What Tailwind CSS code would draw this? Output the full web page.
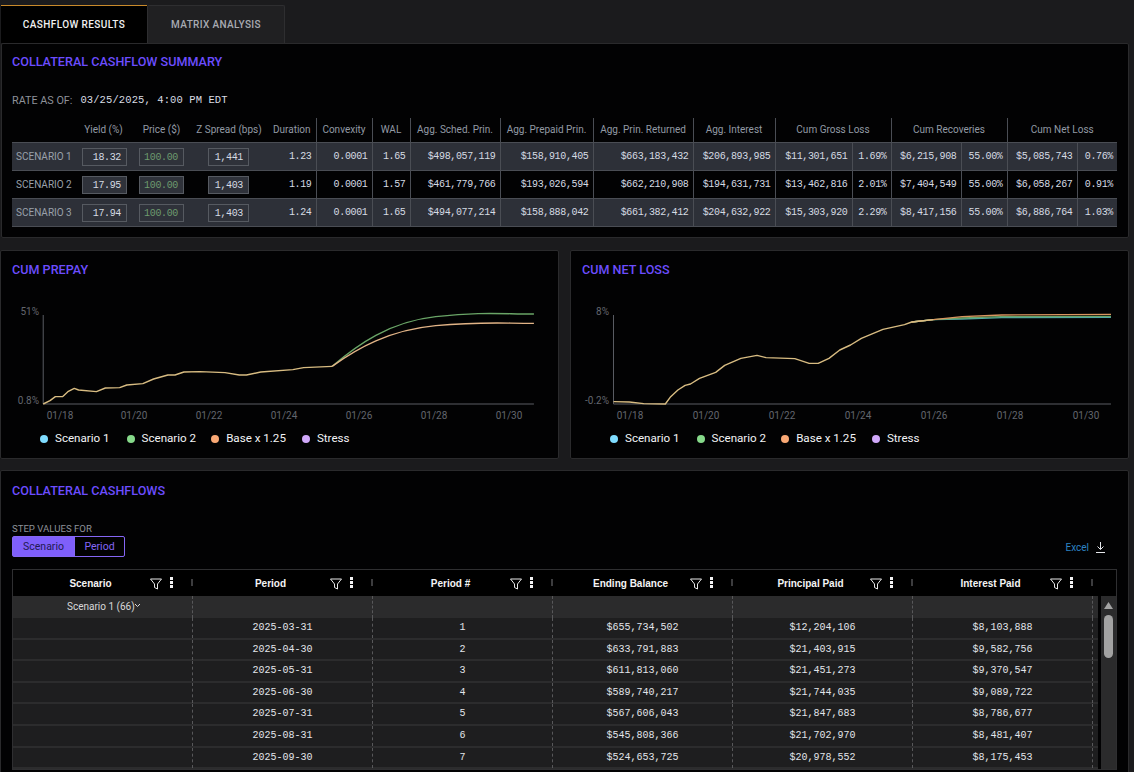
<!DOCTYPE html>
<html><head><meta charset="utf-8"><script src="https://cdn.jsdelivr.net/npm/@tailwindcss/browser@4"></script></head>
<body class="bg-[#1b1b1d] font-['Roboto',sans-serif] overflow-hidden w-[1134px] h-[772px]">
<div class="w-[1129px] h-[772px] overflow-hidden">
  <!-- Tabs -->
  <div class="flex h-[43px] pt-[5px] pl-px">
    <div class="w-[146px] flex items-center justify-center bg-black border-t border-[#c98a2b] text-[10px] font-medium tracking-[0.4px] text-[#f1f1f1]">CASHFLOW RESULTS</div>
    <div class="w-[138px] flex items-center justify-center bg-[#202022] border border-b-0 border-[#2e2e30] rounded-t-[2px] text-[10px] font-medium tracking-[0.35px] text-[#a8abb2]">MATRIX ANALYSIS</div>
  </div>
  <!-- Summary panel -->
  <section class="ml-px h-[195px] bg-[#020203] border border-[#2a2a2c] rounded-[2px] pl-[10px]">
    <h2 class="pt-[11px] h-[35px] text-[12.6px] leading-[14px] font-medium text-[#6c4dff]">COLLATERAL CASHFLOW SUMMARY</h2>
    <div class="flex items-center h-[14px] mt-[15px] gap-[8px]">
      <span class="text-[10.8px] text-[#8d9199]">RATE AS OF:</span>
      <span class="font-['Liberation_Mono',monospace] text-[10.5px] tracking-[0.1px] text-[#d9dde3]">03/25/2025, 4:00 PM EDT</span>
    </div>
    <table class="table-fixed w-[1105px] mt-[10px] font-['Liberation_Mono',monospace] text-[10px] tracking-[-0.35px] text-[#d5dbe3]">
      <colgroup><col class="w-[62px]"><col class="w-[59px]"><col class="w-[57px]"><col class="w-[78px]"><col class="w-[48px]"><col class="w-[56px]"><col class="w-[38px]"><col class="w-[90px]"><col class="w-[93px]"><col class="w-[100px]"><col class="w-[82px]"><col class="w-[77px]"><col class="w-[39px]"><col class="w-[70px]"><col class="w-[46px]"><col class="w-[70px]"><col class="w-[40px]"></colgroup>
      <thead class="font-['Roboto',sans-serif] text-[10px] font-normal tracking-normal text-[#929aa5]">
        <tr class="h-[24px]">
          <th class="font-normal"></th>
          <th class="font-normal">Yield (%)</th>
          <th class="font-normal">Price ($)</th>
          <th class="font-normal">Z Spread (bps)</th>
          <th class="font-normal border-r border-[#4a4d54]">Duration</th>
          <th class="font-normal border-r border-[#4a4d54]">Convexity</th>
          <th class="font-normal border-r border-[#4a4d54]">WAL</th>
          <th class="font-normal border-r border-[#4a4d54]">Agg. Sched. Prin.</th>
          <th class="font-normal border-r border-[#4a4d54]">Agg. Prepaid Prin.</th>
          <th class="font-normal border-r border-[#4a4d54]">Agg. Prin. Returned</th>
          <th class="font-normal border-r border-[#4a4d54]">Agg. Interest</th>
          <th colspan="2" class="font-normal border-r border-[#4a4d54]">Cum Gross Loss</th>
          <th colspan="2" class="font-normal border-r border-[#4a4d54]">Cum Recoveries</th>
          <th colspan="2" class="font-normal">Cum Net Loss</th>
        </tr>
      </thead>
      <tbody class="text-right [&_td]:pt-px">
        <tr class="h-[28px] bg-[#2d3038] border-y border-[#4a4d54]">
          <td class="pl-1 text-left font-['Roboto',sans-serif] text-[10px] tracking-normal text-[#9aa1ab]">SCENARIO 1</td>
          <td><div class="ml-2 w-[45px] h-[18px] leading-[17px] bg-[#2f323a] border border-[#565a61] pr-[5px]">18.32</div></td>
          <td><div class="ml-1.5 w-[45px] h-[18px] leading-[17px] bg-[#2f323a] border border-[#565a61] pr-[5px] text-[#6d9a6e]">100.00</div></td>
          <td><div class="ml-[18px] w-[41px] h-[18px] leading-[17px] bg-[#2f323a] border border-[#565a61] pr-[5px]">1,441</div></td>
          <td class="pr-1 border-r border-[#4a4d54]">1.23</td><td class="pr-1 border-r border-[#4a4d54]">0.0001</td><td class="pr-1 border-r border-[#4a4d54]">1.65</td>
          <td class="pr-1 border-r border-[#4a4d54]">$498,057,119</td><td class="pr-1 border-r border-[#4a4d54]">$158,910,405</td><td class="pr-1 border-r border-[#4a4d54]">$663,183,432</td><td class="pr-1 border-r border-[#4a4d54]">$206,893,985</td>
          <td class="pr-1 border-r border-[#4a4d54]">$11,301,651</td><td class="pr-1 border-r border-[#4a4d54]">1.69%</td><td class="pr-1 border-r border-[#4a4d54]">$6,215,908</td><td class="pr-1 border-r border-[#4a4d54]">55.00%</td><td class="pr-1 border-r border-[#4a4d54]">$5,085,743</td><td class="pr-1">0.76%</td>
        </tr>
        <tr class="h-[28px] bg-[#020203] border-b border-[#4a4d54]">
          <td class="pl-1 text-left font-['Roboto',sans-serif] text-[10px] tracking-normal text-[#9aa1ab]">SCENARIO 2</td>
          <td><div class="ml-2 w-[45px] h-[18px] leading-[17px] bg-[#2f323a] border border-[#565a61] pr-[5px]">17.95</div></td>
          <td><div class="ml-1.5 w-[45px] h-[18px] leading-[17px] bg-[#2f323a] border border-[#565a61] pr-[5px] text-[#6d9a6e]">100.00</div></td>
          <td><div class="ml-[18px] w-[41px] h-[18px] leading-[17px] bg-[#2f323a] border border-[#565a61] pr-[5px]">1,403</div></td>
          <td class="pr-1 border-r border-[#4a4d54]">1.19</td><td class="pr-1 border-r border-[#4a4d54]">0.0001</td><td class="pr-1 border-r border-[#4a4d54]">1.57</td>
          <td class="pr-1 border-r border-[#4a4d54]">$461,779,766</td><td class="pr-1 border-r border-[#4a4d54]">$193,026,594</td><td class="pr-1 border-r border-[#4a4d54]">$662,210,908</td><td class="pr-1 border-r border-[#4a4d54]">$194,631,731</td>
          <td class="pr-1 border-r border-[#4a4d54]">$13,462,816</td><td class="pr-1 border-r border-[#4a4d54]">2.01%</td><td class="pr-1 border-r border-[#4a4d54]">$7,404,549</td><td class="pr-1 border-r border-[#4a4d54]">55.00%</td><td class="pr-1 border-r border-[#4a4d54]">$6,058,267</td><td class="pr-1">0.91%</td>
        </tr>
        <tr class="h-[28px] bg-[#2d3038] border-b border-[#4a4d54]">
          <td class="pl-1 text-left font-['Roboto',sans-serif] text-[10px] tracking-normal text-[#9aa1ab]">SCENARIO 3</td>
          <td><div class="ml-2 w-[45px] h-[18px] leading-[17px] bg-[#2f323a] border border-[#565a61] pr-[5px]">17.94</div></td>
          <td><div class="ml-1.5 w-[45px] h-[18px] leading-[17px] bg-[#2f323a] border border-[#565a61] pr-[5px] text-[#6d9a6e]">100.00</div></td>
          <td><div class="ml-[18px] w-[41px] h-[18px] leading-[17px] bg-[#2f323a] border border-[#565a61] pr-[5px]">1,403</div></td>
          <td class="pr-1 border-r border-[#4a4d54]">1.24</td><td class="pr-1 border-r border-[#4a4d54]">0.0001</td><td class="pr-1 border-r border-[#4a4d54]">1.65</td>
          <td class="pr-1 border-r border-[#4a4d54]">$494,077,214</td><td class="pr-1 border-r border-[#4a4d54]">$158,888,042</td><td class="pr-1 border-r border-[#4a4d54]">$661,382,412</td><td class="pr-1 border-r border-[#4a4d54]">$204,632,922</td>
          <td class="pr-1 border-r border-[#4a4d54]">$15,303,920</td><td class="pr-1 border-r border-[#4a4d54]">2.29%</td><td class="pr-1 border-r border-[#4a4d54]">$8,417,156</td><td class="pr-1 border-r border-[#4a4d54]">55.00%</td><td class="pr-1 border-r border-[#4a4d54]">$6,886,764</td><td class="pr-1">1.03%</td>
        </tr>
      </tbody>
    </table>
  </section>
  <!-- Charts -->
  <div class="grid grid-cols-[559px_559px] gap-x-[11px] mt-3 h-[209px]">
    <section class="bg-[#020203] border border-[#2a2a2c] rounded-[2px]">
      <h2 class="pl-[11px] pt-[12px] h-[49px] text-[12.6px] leading-[14px] font-medium text-[#6c4dff]">CUM PREPAY</h2>
      <svg class="block w-[557px] h-[125px]" viewBox="0 0 557 125" font-family="Roboto" font-size="10" fill="#62666e">
        <svg x="-1" y="-50" width="560" height="210" viewBox="0 0 1568 630" preserveAspectRatio="none" overflow="visible" fill="none" stroke-linejoin="round">
          <path d="M121 195V462H1495" stroke="#5a5d64" stroke-width="1" vector-effect="non-scaling-stroke"/>
          <path d="M930 349C1000 285 1090 215 1220 200S1400 192 1495 192" stroke="#6aa567" stroke-width="1.4" vector-effect="non-scaling-stroke"/>
          <path d="M930 349C1000 295 1090 240 1220 227S1400 220 1495 220" stroke="#e2b487" stroke-width="1.4" vector-effect="non-scaling-stroke"/>
          <path d="M121 462L140 452L155 440H175L190 425L208 415L220 420L270 425L295 414L335 413L355 405L400 401L430 387L470 375H490L515 366L560 365L630 368L670 375H690L730 366L820 359L850 353L930 349" stroke="#d8bc82" stroke-width="1.4" vector-effect="non-scaling-stroke"/>
        </svg>
        <text x="38" y="15" text-anchor="end">51%</text>
        <text x="38" y="104" text-anchor="end">0.8%</text>
        <text x="59" y="119" text-anchor="middle">01/18</text><text x="133" y="119" text-anchor="middle">01/20</text><text x="208" y="119" text-anchor="middle">01/22</text><text x="283" y="119" text-anchor="middle">01/24</text><text x="358" y="119" text-anchor="middle">01/26</text><text x="433" y="119" text-anchor="middle">01/28</text><text x="508" y="119" text-anchor="middle">01/30</text>
      </svg>
      <div class="flex items-center h-[16px] mt-[6px] pl-[39px] text-[11.6px] text-[#f3f4f6]">
        <span class="w-2 h-2 rounded-full bg-[#7fdcff] mr-[7px]"></span><span class="mr-[17px]">Scenario 1</span>
        <span class="w-2 h-2 rounded-full bg-[#86d98a] mr-[7px]"></span><span class="mr-[15px]">Scenario 2</span>
        <span class="w-2 h-2 rounded-full bg-[#f9a875] mr-[7px]"></span><span class="mr-[16px]">Base x 1.25</span>
        <span class="w-2 h-2 rounded-full bg-[#d0a8fa] mr-[7px]"></span><span>Stress</span>
      </div>
    </section>
    <section class="bg-[#020203] border border-[#2a2a2c] rounded-[2px]">
      <h2 class="pl-[11px] pt-[12px] h-[49px] text-[12.6px] leading-[14px] font-medium text-[#6c4dff]">CUM NET LOSS</h2>
      <svg class="block w-[557px] h-[125px]" viewBox="0 0 557 125" font-family="Roboto" font-size="10" fill="#62666e">
        <svg x="-1" y="-50" width="564" height="210" viewBox="0 0 1568 630" preserveAspectRatio="none" overflow="visible" fill="none" stroke-linejoin="round">
          <path d="M121 195V462H1504" stroke="#5a5d64" stroke-width="1" vector-effect="non-scaling-stroke"/>
          <path d="M950 216L1010 209L1090 207L1200 203L1504 202" stroke="#4fa7a8" stroke-width="1.4" vector-effect="non-scaling-stroke"/>
          <path d="M950 216L1010 209L1090 204L1200 200L1504 199" stroke="#6aa567" stroke-width="1.4" vector-effect="non-scaling-stroke"/>
          <path d="M950 216L1010 209L1090 200L1200 195L1504 193" stroke="#d9955f" stroke-width="1.4" vector-effect="non-scaling-stroke"/>
          <path d="M121 455L165 456L205 461L265 462L280 440L300 420L320 406L335 402L360 385L405 367L430 346L475 325L520 316L545 323L625 326L665 340H690L720 325L750 300L780 285L810 265L870 238L930 224L950 216L1010 209" stroke="#d8bc82" stroke-width="1.4" vector-effect="non-scaling-stroke"/>
        </svg>
        <text x="38" y="15" text-anchor="end">8%</text>
        <text x="38" y="104" text-anchor="end">-0.2%</text>
        <text x="59" y="119" text-anchor="middle">01/18</text><text x="135" y="119" text-anchor="middle">01/20</text><text x="211" y="119" text-anchor="middle">01/22</text><text x="287" y="119" text-anchor="middle">01/24</text><text x="363" y="119" text-anchor="middle">01/26</text><text x="439" y="119" text-anchor="middle">01/28</text><text x="515" y="119" text-anchor="middle">01/30</text>
      </svg>
      <div class="flex items-center h-[16px] mt-[6px] pl-[39px] text-[11.6px] text-[#f3f4f6]">
        <span class="w-2 h-2 rounded-full bg-[#7fdcff] mr-[7px]"></span><span class="mr-[17px]">Scenario 1</span>
        <span class="w-2 h-2 rounded-full bg-[#86d98a] mr-[7px]"></span><span class="mr-[15px]">Scenario 2</span>
        <span class="w-2 h-2 rounded-full bg-[#f9a875] mr-[7px]"></span><span class="mr-[16px]">Base x 1.25</span>
        <span class="w-2 h-2 rounded-full bg-[#d0a8fa] mr-[7px]"></span><span>Stress</span>
      </div>
    </section>
  </div>
  <!-- Cashflows -->
  <section class="mt-[11px] h-[340px] bg-[#020203] border border-[#2a2a2c] rounded-[2px] pl-[11px] pr-[11px]">
    <h2 class="pt-[13px] h-[52px] text-[12.6px] leading-[14px] font-medium text-[#6c4dff]">COLLATERAL CASHFLOWS</h2>
    <div class="text-[9.6px] leading-[12px] text-[#8d9199]">STEP VALUES FOR</div>
    <div class="flex items-end justify-between h-[21px] mt-px">
      <div class="flex w-[113px] h-[21px] border border-[#8566f5] rounded-[2px] text-[10.5px] leading-[19px] text-center">
        <div class="w-[61px] bg-[#7f5ffb] text-[#221a52]">Scenario</div>
        <div class="flex-1 border-l border-[#8566f5] text-[#8566f5]">Period</div>
      </div>
      <div class="flex items-center gap-[7px] pr-[12px] pb-[2px] text-[10px] text-[#2d82c4]">
        <span>Excel</span>
        <svg class="w-[9px] h-[11px]" viewBox="0 0 9 11" fill="none" stroke="#e5e7eb" stroke-width="1"><path d="M4.5 0V7.5M1.5 4.5L4.5 7.5L7.5 4.5M0 10.5H9"/></svg>
      </div>
    </div>
    <div class="mt-3 w-[1105px] border border-[#2f2f31]">
      <!-- header -->
      <div class="grid grid-cols-[180px_180px_180px_180px_180px_180px_1fr] h-[26px] bg-black font-['Liberation_Sans',sans-serif] text-[10px] font-bold text-[#f4f4f5]">
        <div class="relative flex items-center pt-px"><span class="ml-5 w-[115px] text-center">Scenario</span><svg class="w-3 h-3 ml-[2px]" viewBox="0 0 12 12" fill="none" stroke="#e8e8e8"><path d="M.5 1H11.5L7.5 6V11L4.5 9.5V6Z"/></svg><svg class="w-[4px] h-[12px] ml-[7px] -mt-px" viewBox="0 0 4 12" fill="#f4f4f5"><rect x="1" width="3" height="3"/><rect x="1" y="4" width="3" height="3"/><rect x="1" y="8" width="3" height="3"/></svg><span class="absolute right-0 top-[9px] w-[2px] h-[7px] bg-[#3c3c3e]"></span></div>
        <div class="relative flex items-center pt-px"><span class="ml-5 w-[115px] text-center">Period</span><svg class="w-3 h-3 ml-[2px]" viewBox="0 0 12 12" fill="none" stroke="#e8e8e8"><path d="M.5 1H11.5L7.5 6V11L4.5 9.5V6Z"/></svg><svg class="w-[4px] h-[12px] ml-[7px] -mt-px" viewBox="0 0 4 12" fill="#f4f4f5"><rect x="1" width="3" height="3"/><rect x="1" y="4" width="3" height="3"/><rect x="1" y="8" width="3" height="3"/></svg><span class="absolute right-0 top-[9px] w-[2px] h-[7px] bg-[#3c3c3e]"></span></div>
        <div class="relative flex items-center pt-px"><span class="ml-5 w-[115px] text-center">Period #</span><svg class="w-3 h-3 ml-[2px]" viewBox="0 0 12 12" fill="none" stroke="#e8e8e8"><path d="M.5 1H11.5L7.5 6V11L4.5 9.5V6Z"/></svg><svg class="w-[4px] h-[12px] ml-[7px] -mt-px" viewBox="0 0 4 12" fill="#f4f4f5"><rect x="1" width="3" height="3"/><rect x="1" y="4" width="3" height="3"/><rect x="1" y="8" width="3" height="3"/></svg><span class="absolute right-0 top-[9px] w-[2px] h-[7px] bg-[#3c3c3e]"></span></div>
        <div class="relative flex items-center pt-px"><span class="ml-5 w-[115px] text-center">Ending Balance</span><svg class="w-3 h-3 ml-[2px]" viewBox="0 0 12 12" fill="none" stroke="#e8e8e8"><path d="M.5 1H11.5L7.5 6V11L4.5 9.5V6Z"/></svg><svg class="w-[4px] h-[12px] ml-[7px] -mt-px" viewBox="0 0 4 12" fill="#f4f4f5"><rect x="1" width="3" height="3"/><rect x="1" y="4" width="3" height="3"/><rect x="1" y="8" width="3" height="3"/></svg><span class="absolute right-0 top-[9px] w-[2px] h-[7px] bg-[#3c3c3e]"></span></div>
        <div class="relative flex items-center pt-px"><span class="ml-5 w-[115px] text-center">Principal Paid</span><svg class="w-3 h-3 ml-[2px]" viewBox="0 0 12 12" fill="none" stroke="#e8e8e8"><path d="M.5 1H11.5L7.5 6V11L4.5 9.5V6Z"/></svg><svg class="w-[4px] h-[12px] ml-[7px] -mt-px" viewBox="0 0 4 12" fill="#f4f4f5"><rect x="1" width="3" height="3"/><rect x="1" y="4" width="3" height="3"/><rect x="1" y="8" width="3" height="3"/></svg><span class="absolute right-0 top-[9px] w-[2px] h-[7px] bg-[#3c3c3e]"></span></div>
        <div class="relative flex items-center pt-px"><span class="ml-5 w-[115px] text-center">Interest Paid</span><svg class="w-3 h-3 ml-[2px]" viewBox="0 0 12 12" fill="none" stroke="#e8e8e8"><path d="M.5 1H11.5L7.5 6V11L4.5 9.5V6Z"/></svg><svg class="w-[4px] h-[12px] ml-[7px] -mt-px" viewBox="0 0 4 12" fill="#f4f4f5"><rect x="1" width="3" height="3"/><rect x="1" y="4" width="3" height="3"/><rect x="1" y="8" width="3" height="3"/></svg><span class="absolute right-0 top-[9px] w-[2px] h-[7px] bg-[#3c3c3e]"></span></div>
        <div></div>
      </div>
      <div class="flex">
        <div class="w-[1085px] font-['Liberation_Mono',monospace] text-[10px] text-[#e2e5ea]">
          <div class="grid grid-cols-[180px_180px_180px_180px_180px_180px_1fr] h-[22px] bg-[#2b2b2c] font-['Roboto',sans-serif] text-[10px] text-[#d8d8da] items-stretch">
            <div class="border-r border-dashed border-[#58585a] flex pl-[54px] leading-[21px]">Scenario 1 (66)<svg class="w-[5px] h-[3px] mt-[8px]" viewBox="0 0 5 3" fill="none" stroke="#d8d8da"><path d="M0 0L2.5 2.5L5 0"/></svg></div><div class="border-r border-dashed border-[#58585a]"></div><div class="border-r border-dashed border-[#58585a]"></div><div class="border-r border-dashed border-[#58585a]"></div><div class="border-r border-dashed border-[#58585a]"></div><div class="border-r border-dashed border-[#58585a]"></div><div></div>
          </div>
          <div class="grid grid-cols-[180px_180px_180px_180px_180px_180px_1fr] h-[21.6px] bg-[#1e1e1f] border-b-2 border-[#2c2c2d] text-center leading-[20px]">
            <div class="border-r border-dashed border-[#58585a]"></div><div class="border-r border-dashed border-[#58585a]">2025-03-31</div><div class="border-r border-dashed border-[#58585a]">1</div><div class="border-r border-dashed border-[#58585a]">$655,734,502</div><div class="border-r border-dashed border-[#58585a]">$12,204,106</div><div class="border-r border-dashed border-[#58585a]">$8,103,888</div><div></div>
          </div>
          <div class="grid grid-cols-[180px_180px_180px_180px_180px_180px_1fr] h-[21.6px] bg-[#1e1e1f] border-b-2 border-[#2c2c2d] text-center leading-[20px]">
            <div class="border-r border-dashed border-[#58585a]"></div><div class="border-r border-dashed border-[#58585a]">2025-04-30</div><div class="border-r border-dashed border-[#58585a]">2</div><div class="border-r border-dashed border-[#58585a]">$633,791,883</div><div class="border-r border-dashed border-[#58585a]">$21,403,915</div><div class="border-r border-dashed border-[#58585a]">$9,582,756</div><div></div>
          </div>
          <div class="grid grid-cols-[180px_180px_180px_180px_180px_180px_1fr] h-[21.6px] bg-[#1e1e1f] border-b-2 border-[#2c2c2d] text-center leading-[20px]">
            <div class="border-r border-dashed border-[#58585a]"></div><div class="border-r border-dashed border-[#58585a]">2025-05-31</div><div class="border-r border-dashed border-[#58585a]">3</div><div class="border-r border-dashed border-[#58585a]">$611,813,060</div><div class="border-r border-dashed border-[#58585a]">$21,451,273</div><div class="border-r border-dashed border-[#58585a]">$9,370,547</div><div></div>
          </div>
          <div class="grid grid-cols-[180px_180px_180px_180px_180px_180px_1fr] h-[21.6px] bg-[#1e1e1f] border-b-2 border-[#2c2c2d] text-center leading-[20px]">
            <div class="border-r border-dashed border-[#58585a]"></div><div class="border-r border-dashed border-[#58585a]">2025-06-30</div><div class="border-r border-dashed border-[#58585a]">4</div><div class="border-r border-dashed border-[#58585a]">$589,740,217</div><div class="border-r border-dashed border-[#58585a]">$21,744,035</div><div class="border-r border-dashed border-[#58585a]">$9,089,722</div><div></div>
          </div>
          <div class="grid grid-cols-[180px_180px_180px_180px_180px_180px_1fr] h-[21.6px] bg-[#1e1e1f] border-b-2 border-[#2c2c2d] text-center leading-[20px]">
            <div class="border-r border-dashed border-[#58585a]"></div><div class="border-r border-dashed border-[#58585a]">2025-07-31</div><div class="border-r border-dashed border-[#58585a]">5</div><div class="border-r border-dashed border-[#58585a]">$567,606,043</div><div class="border-r border-dashed border-[#58585a]">$21,847,683</div><div class="border-r border-dashed border-[#58585a]">$8,786,677</div><div></div>
          </div>
          <div class="grid grid-cols-[180px_180px_180px_180px_180px_180px_1fr] h-[21.6px] bg-[#1e1e1f] border-b-2 border-[#2c2c2d] text-center leading-[20px]">
            <div class="border-r border-dashed border-[#58585a]"></div><div class="border-r border-dashed border-[#58585a]">2025-08-31</div><div class="border-r border-dashed border-[#58585a]">6</div><div class="border-r border-dashed border-[#58585a]">$545,808,366</div><div class="border-r border-dashed border-[#58585a]">$21,702,970</div><div class="border-r border-dashed border-[#58585a]">$8,481,407</div><div></div>
          </div>
          <div class="grid grid-cols-[180px_180px_180px_180px_180px_180px_1fr] h-[21.6px] bg-[#1e1e1f] border-b-2 border-[#2c2c2d] text-center leading-[20px]">
            <div class="border-r border-dashed border-[#58585a]"></div><div class="border-r border-dashed border-[#58585a]">2025-09-30</div><div class="border-r border-dashed border-[#58585a]">7</div><div class="border-r border-dashed border-[#58585a]">$524,653,725</div><div class="border-r border-dashed border-[#58585a]">$20,978,552</div><div class="border-r border-dashed border-[#58585a]">$8,175,453</div><div></div>
          </div>
        </div>
        <div class="flex-1 ml-[3px] bg-[#2b2b2c] flex flex-col items-center pt-[6px] gap-[6px]">
          <svg class="w-[9px] h-[7px]" viewBox="0 0 9 7" fill="#a3a3a3"><path d="M4.5 0L9 7H0Z"/></svg>
          <div class="w-[9px] h-[43px] rounded-full bg-[#a3a3a3]"></div>
        </div>
      </div>
    </div>
  </section>
</div>
</body></html>
